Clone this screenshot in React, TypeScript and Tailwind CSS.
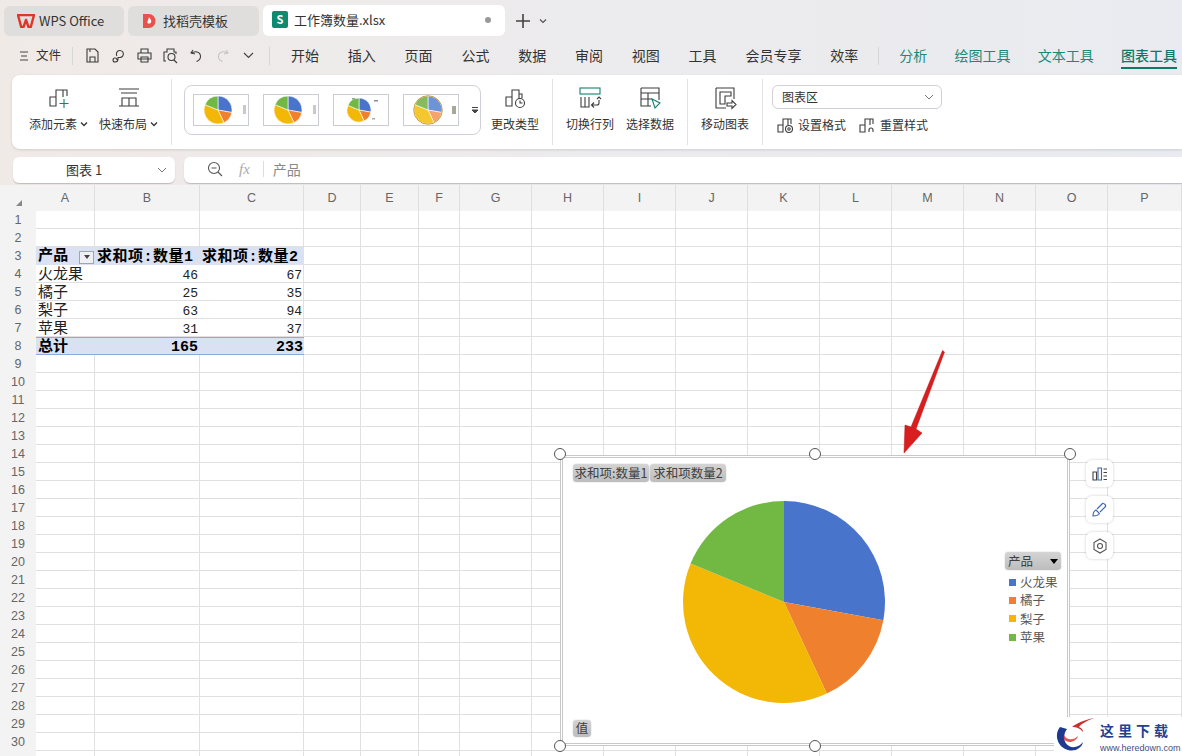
import { ReactNode } from "react";

const UI_FONT = "font-['Noto_Sans_CJK_SC','Noto_Sans',sans-serif]";
const CELL_FONT = "font-['Liberation_Mono','Noto_Sans_CJK_SC',monospace]";

const COLUMNS = ["A", "B", "C", "D", "E", "F", "G", "H", "I", "J", "K", "L", "M", "N", "O", "P"];
const ROWS = Array.from({ length: 31 }, (_, i) => i + 1);

const MENU = ["开始", "插入", "页面", "公式", "数据", "审阅", "视图", "工具", "会员专享", "效率"];

const SLICES = [
  { value: 46, color: "#4874cc" },
  { value: 25, color: "#ef802e" },
  { value: 63, color: "#f3b805" },
  { value: 31, color: "#72b944" },
];

function Pie({
  cx,
  cy,
  r,
  gap = 0,
  colors,
}: {
  cx: number;
  cy: number;
  r: number;
  gap?: number;
  colors?: string[];
}) {
  const total = SLICES.reduce((s, x) => s + x.value, 0);
  let acc = 0;
  return (
    <>
      {SLICES.map((s, i) => {
        const a0 = (acc / total) * Math.PI * 2;
        acc += s.value;
        const a1 = (acc / total) * Math.PI * 2;
        const large = a1 - a0 > Math.PI ? 1 : 0;
        const x0 = cx + r * Math.sin(a0);
        const y0 = cy - r * Math.cos(a0);
        const x1 = cx + r * Math.sin(a1);
        const y1 = cy - r * Math.cos(a1);
        return (
          <path
            key={i}
            d={`M${cx} ${cy}L${x0} ${y0}A${r} ${r} 0 ${large} 1 ${x1} ${y1}Z`}
            fill={colors ? colors[i] : s.color}
            stroke={gap ? "#fff" : "none"}
            strokeWidth={gap}
          />
        );
      })}
    </>
  );
}

function Ico({ w = 24, h = 24, children }: { w?: number; h?: number; children: ReactNode }) {
  return (
    <svg width={w} height={h} viewBox={`0 0 ${w} ${h}`} fill="none" stroke="#3c3c3c" strokeWidth="1.1">
      {children}
    </svg>
  );
}

function Thumb({ kind }: { kind: number }) {
  return (
    <div className="h-[32px] w-[56px] border border-[#c9ccd2] bg-white">
      <svg width="54" height="30" viewBox="0 0 54 30">
        {kind === 3 ? (
          <>
            <Pie cx={24} cy={15} r={14} gap={0.6} colors={["#6d93d8", "#f5a36c", "#f5c72e", "#86bd5c"]} />
            <circle cx="24" cy="15" r="14.3" fill="none" stroke="#b98a22" strokeWidth="0.8" />
            <rect x="48" y="11" width="4" height="8" fill="#a8a894" />
          </>
        ) : kind === 2 ? (
          <>
            <Pie cx={25} cy={15} r={12} gap={0.6} />
            <rect x="40" y="5" width="4" height="1.5" fill="#88a" />
            <rect x="38" y="23" width="3" height="1.5" fill="#aaa" />
            <rect x="18" y="3" width="3" height="1.5" fill="#8a8" />
          </>
        ) : (
          <>
            <Pie cx={24} cy={15} r={14} gap={0.6} />
            <rect x="49" y="10" width="3" height="9" fill="#c9c9c9" />
          </>
        )}
      </svg>
    </div>
  );
}

function BigButton({ icon, label, caret, className }: { icon: ReactNode; label: string; caret?: boolean; className: string }) {
  return (
    <div className={`flex shrink-0 flex-col items-center ${className}`}>
      <div className="flex h-[24px] items-center justify-center">{icon}</div>
      <div className="mt-[4px] flex items-center whitespace-nowrap text-[12px] leading-[20px] text-[#333]">
        {label}
        {caret && (
          <svg width="8" height="6" viewBox="0 0 8 6" className="ml-[3px]" fill="none" stroke="#333" strokeWidth="1.3">
            <path d="M1 1.5l3 3 3-3" />
          </svg>
        )}
      </div>
    </div>
  );
}

function Sep({ className }: { className: string }) {
  return <div className={`h-[66px] w-px shrink-0 bg-[#e3e3e3] ${className}`} />;
}

function Tabs() {
  return (
    <div className="flex h-[36px] items-end pl-[4px]">
      <div className="flex h-[30px] w-[120px] items-center rounded-md bg-[#e0dedd] pb-[1px] pl-[13px]">
        <svg width="18" height="14" viewBox="0 0 18 14">
          <path d="M1 1h16l-3.2 12h-2.3L9 6l-2.5 7H4.2z" fill="none" stroke="#e0352b" strokeWidth="2.4" strokeLinejoin="round" />
        </svg>
        <span className="ml-[4px] text-[13px] text-[#333]">WPS Office</span>
      </div>
      <div className="ml-[4px] flex h-[30px] w-[131px] items-center rounded-md bg-[#e0dedd] pb-[1px] pl-[14px]">
        <svg width="14" height="16" viewBox="0 0 14 16">
          <path d="M1 1h6a6.5 7 0 0 1 0 14H1z" fill="#e8514c" />
          <path d="M7 4c1 2 3 3 2 5.5-.6 1.3-3 1.6-3.6.2C5 8.500 6.500 7 7 4z" fill="#fff" />
        </svg>
        <span className="ml-[7px] text-[13px] text-[#333]">找稻壳模板</span>
      </div>
      <div className="ml-[4px] flex h-[31px] w-[242px] items-center rounded-md bg-white pb-[2px] pl-[9px]">
        <div className="flex h-[17px] w-[16px] items-center justify-center rounded-[2px] bg-[#0e8a70] text-[11px] font-bold text-white">S</div>
        <span className="ml-[6px] text-[13px] text-[#333]">工作簿数量.xlsx</span>
        <div className="ml-auto mr-[14px] h-[6px] w-[6px] rounded-full bg-[#999]" />
      </div>
      <div className="ml-[10px] flex h-[30px] items-center">
        <svg width="16" height="16" viewBox="0 0 16 16" stroke="#444" strokeWidth="1.6">
          <path d="M8 1v14M1 8h14" />
        </svg>
        <svg width="8" height="6" viewBox="0 0 8 6" className="ml-[8px]" fill="none" stroke="#555" strokeWidth="1.2">
          <path d="M1 1.500l3 3 3-3" />
        </svg>
      </div>
    </div>
  );
}

function MenuBar() {
  return (
    <div className="flex h-[39px] items-center text-[14px] text-[#333]">
      <svg width="10" height="10" viewBox="0 0 10 10" className="ml-[19px]" stroke="#444" strokeWidth="1.1">
        <path d="M1 1h8M2 5h6M1 9h8" />
      </svg>
      <span className="ml-[7px] text-[12.500px]">文件</span>
      <div className="ml-[11px] h-[18px] w-px bg-[#d6d6d6]" />
      <div className="ml-[11px] flex items-center gap-[9px]">
        <Ico w={17} h={17}>
          <path d="M3 2h8l3 3v10H3zM6 15v-5h5v5M6 2v3" />
        </Ico>
        <Ico w={17} h={17}>
          <path d="M7 9a3.500 3.500 0 1 1 3 1.500H8V12a3 3 0 0 1-3 3 2 2 0 1 1 2-2" />
        </Ico>
        <Ico w={17} h={17}>
          <path d="M5 6V2h7v4M2 6h13v6H2zM5 10h7v5H5z" />
        </Ico>
        <Ico w={17} h={17}>
          <path d="M4 14H2V5h3V2h7v3h2v2M6 10a3.500 3.500 0 1 0 7 0 3.500 3.500 0 1 0-7 0zM12 13l3 3" />
        </Ico>
        <Ico w={17} h={17}>
          <path d="M5 3L3 6l4 1M3.500 6.500c3-3 9-2 9 3 0 2-1.500 4-4 5" />
        </Ico>
        <svg width="17" height="17" viewBox="0 0 17 17" fill="none" stroke="#c4c4c4" strokeWidth="1.1">
          <path d="M12 3l2 3-4 1M13.500 6.500c-3-3-9-2-9 3 0 2 1.500 4 4 5" />
        </svg>
        <svg width="17" height="17" viewBox="0 0 17 17" fill="none" stroke="#444" strokeWidth="1.2">
          <path d="M4 6l4.500 4.500L13 6" />
        </svg>
      </div>
      <div className="ml-[12px] h-[18px] w-px bg-[#d6d6d6]" />
      <div className="ml-[21px] flex items-center gap-[28.800px] whitespace-nowrap">
        {MENU.map((m) => (
          <span key={m}>{m}</span>
        ))}
      </div>
      <div className="ml-[20px] h-[18px] w-px bg-[#d6d6d6]" />
      <div className="ml-[20px] flex items-center gap-[27.300px] whitespace-nowrap text-[#1a8a78]">
        <span>分析</span>
        <span>绘图工具</span>
        <span>文本工具</span>
        <span className="relative font-medium text-[#0d7a68]">
          图表工具
          <span className="absolute -bottom-[3px] left-0 h-[2px] w-full bg-[#0d7a68]" />
        </span>
      </div>
    </div>
  );
}

function Ribbon() {
  return (
    <div className="ml-[12px] flex h-[74px] items-start rounded-l-lg bg-white shadow-[0_1px_3px_rgba(0,0,0,0.12)]">
      <BigButton
        className="ml-[17px] mt-[11px]"
        caret
        label="添加元素"
        icon={
          <Ico>
            <path d="M3 20V11h6v9zM9 20V4h7v7M16 4h4v6" />
            <path d="M17 13v9M12.500 17.500h9" stroke="#12806c" />
          </Ico>
        }
      />
      <BigButton
        className="ml-[11px] mt-[11px]"
        caret
        label="快速布局"
        icon={
          <Ico>
            <path d="M2 3h20M4 7h16M2 20h20M5 20v-8h7v8M12 12h7v8" />
          </Ico>
        }
      />
      <Sep className="ml-[13px] mt-[4px]" />
      <div className="ml-[12px] mt-[10px] flex h-[50px] w-[297px] shrink-0 items-center rounded-lg border border-[#cfd1d6] pl-[8px]">
        <div className="flex items-center gap-[14px]">
          <Thumb kind={0} />
          <Thumb kind={1} />
          <Thumb kind={2} />
          <Thumb kind={3} />
        </div>
        <svg width="8" height="8" viewBox="0 0 8 8" className="ml-[12px]" stroke="#444">
          <path d="M1 1.500h6" />
          <path d="M1 4h6L4 7z" fill="#444" />
        </svg>
      </div>
      <BigButton
        className="ml-[10px] mt-[11px]"
        label="更改类型"
        icon={
          <Ico>
            <path d="M3 20V11h6v9zM9 20V4h7v9M16 8h3v4" />
            <circle cx="17" cy="17" r="4.500" />
            <path d="M17 14.500V17h2.500" />
          </Ico>
        }
      />
      <Sep className="ml-[13px] mt-[4px]" />
      <BigButton
        className="ml-[13px] mt-[11px]"
        label="切换行列"
        icon={
          <Ico>
            <rect x="2" y="2" width="20" height="6" stroke="#12806c" />
            <path d="M3 11v10h8V11M7 11v10M21 14v3a2 2 0 0 1-2 2h-5M16 16.500L13.500 19l2.500 2.500M19 13l2-2 2 2" />
          </Ico>
        }
      />
      <BigButton
        className="ml-[12px] mt-[11px]"
        label="选择数据"
        icon={
          <Ico>
            <path d="M3 2h18v12M3 2v18h10M3 7h18M3 13h11M10 7v13" />
            <path d="M14 13l8 4-5 5z" stroke="#12806c" />
          </Ico>
        }
      />
      <Sep className="ml-[13px] mt-[4px]" />
      <BigButton
        className="ml-[13px] mt-[11px]"
        label="移动图表"
        icon={
          <Ico>
            <path d="M3 2h18v11M3 2v20h10M7 6h11v4H12v8H7z" />
            <path d="M14 17h5v-2.500l4 4-4 4V20h-5z" />
          </Ico>
        }
      />
      <Sep className="ml-[13px] mt-[4px]" />
      <div className="ml-[9px] mt-[10px] flex flex-col">
        <div className="flex h-[24px] w-[170px] items-center justify-between rounded-md border border-[#cfd1d6] pl-[9px] pr-[7px] text-[12px] text-[#333]">
          图表区
          <svg width="10" height="6" viewBox="0 0 10 6" fill="none" stroke="#777">
            <path d="M1 1l4 4 4-4" />
          </svg>
        </div>
        <div className="mt-[6px] flex items-center whitespace-nowrap text-[12px] leading-[20px] text-[#333]">
          <div className="ml-[5px]">
            <Ico w={17} h={17}>
              <path d="M1 15V8h5v7zM6 15V2h5v6M11 2h3v5" />
              <circle cx="12" cy="12" r="3.500" />
              <circle cx="12" cy="12" r="1.200" />
            </Ico>
          </div>
          <span className="ml-[4px]">设置格式</span>
          <div className="ml-[13px]">
            <Ico w={17} h={17}>
              <path d="M1 15V8h5v7zM6 15V2h5v6M11 2h3v5M10 15v-2a2 2 0 1 1 4 0v2" />
            </Ico>
          </div>
          <span className="ml-[4px]">重置样式</span>
        </div>
      </div>
    </div>
  );
}

function FormulaBar() {
  return (
    <div className="mt-[8px] flex h-[26px] items-stretch">
      <div className="ml-[13px] flex w-[162px] items-center justify-between rounded-md bg-white pl-[53px] pr-[8px] text-[13px] text-[#333] shadow-[0_1px_1px_rgba(0,0,0,0.2)]">
        图表 1
        <svg width="10" height="6" viewBox="0 0 10 6" fill="none" stroke="#777">
          <path d="M1 1l4 4 4-4" />
        </svg>
      </div>
      <div className="ml-[9px] flex flex-1 items-center rounded-l-md bg-white pb-[2px] shadow-[0_1px_1px_rgba(0,0,0,0.2)]">
        <svg width="16" height="16" viewBox="0 0 16 16" className="ml-[23px]" fill="none" stroke="#555" strokeWidth="1.1">
          <circle cx="7" cy="7" r="5.500" />
          <path d="M4.500 7h5M11 11l4 4" />
        </svg>
        <span className="ml-[16px] font-['Liberation_Serif',serif] text-[15px] italic text-[#aaa]">fx</span>
        <div className="ml-[13px] h-[16px] w-px bg-[#ddd]" />
        <span className="ml-[9px] text-[14px] text-[#888]">产品</span>
      </div>
    </div>
  );
}

const COL_WIDTHS = "grid-cols-[36px_59px_105px_104px_57px_58px_41px_72px_72px_72px_72px_72px_72px_72px_72px_72px_74px]";

function cellContent(col: string, row: number) {
  const data: Record<number, [string, string, string]> = {
    4: ["火龙果", "46", "67"],
    5: ["橘子", "25", "35"],
    6: ["梨子", "63", "94"],
    7: ["苹果", "31", "37"],
  };
  if (row === 3) {
    if (col === "A")
      return (
        <div className="flex h-full items-center justify-between pl-[2px] pr-px pt-[2px] text-[15px] font-bold tracking-[0.3px] text-black">
          产品
          <span className="flex h-[13px] w-[15px] items-center justify-center border border-[#9aa] bg-[#eef0f4]">
            <span className="h-0 w-0 border-x-[3.500px] border-t-[4px] border-x-transparent border-t-[#444]" />
          </span>
        </div>
      );
    if (col === "B" || col === "C")
      return (
        <div className="whitespace-nowrap pl-[2px] pt-[2px] text-[15px] font-bold tracking-[0.5px] text-black">
          求和项:数量{col === "B" ? 1 : 2}
        </div>
      );
  }
  if (data[row]) {
    if (col === "A") return <div className="whitespace-nowrap pl-[2px] pt-[2px] text-[15px] text-[#222]">{data[row][0]}</div>;
    if (col === "B") return <div className="pr-[2px] pt-[2px] text-right text-[13px] text-[#222]">{data[row][1]}</div>;
    if (col === "C") return <div className="pr-[1px] pt-[2px] text-right text-[13px] text-[#222]">{data[row][2]}</div>;
  }
  if (row === 8) {
    if (col === "A") return <div className="pl-[2px] pt-[1px] text-[15px] font-bold text-black">总计</div>;
    if (col === "B") return <div className="pr-[2px] pt-[1px] text-right text-[15px] font-bold text-black">165</div>;
    if (col === "C") return <div className="pr-[1px] pt-[1px] text-right text-[15px] font-bold text-black">233</div>;
  }
  return null;
}

function Sheet() {
  return (
    <div className={`mt-[2px] bg-white ${CELL_FONT}`}>
      <div className={`grid h-[26px] ${COL_WIDTHS} bg-[#f3f3f3]`}>
        <div className="flex items-end justify-center pb-[5px]">
          <span className="ml-[1px] h-0 w-0 border-b-[6px] border-l-[6px] border-b-[#888] border-l-transparent" />
        </div>
        {COLUMNS.map((c) => (
          <div
            key={c}
            className="flex items-center justify-center border-r border-[#dedede] font-['Liberation_Sans',sans-serif] text-[12.500px] text-[#666]"
          >
            {c}
          </div>
        ))}
      </div>
      <div className={`grid ${COL_WIDTHS} auto-rows-[18px]`}>
        {ROWS.map((row) => (
          <div key={row} className="contents">
            <div className="flex items-center justify-center bg-[#f3f3f3] pt-[1px] font-['Liberation_Sans',sans-serif] text-[12.500px] text-[#666]">
              {row < 31 ? row : ""}
            </div>
            {COLUMNS.map((c) => {
              const pivot = (row === 3 || row === 8) && (c === "A" || c === "B" || c === "C");
              return (
                <div
                  key={c}
                  className={`leading-[18px] ${
                    pivot
                      ? row === 8
                        ? "border-y border-[#8ea9db] bg-[#d9e1f2]"
                        : "bg-[#d9e1f2]"
                      : row >= 4 && row <= 7 && (c === "A" || c === "B")
                        ? "border-b border-[#e0e0e0]"
                        : "border-b border-r border-[#e0e0e0]"
                  }`}
                >
                  {cellContent(c, row)}
                </div>
              );
            })}
          </div>
        ))}
      </div>
    </div>
  );
}

function Pill({ children, className }: { children: ReactNode; className: string }) {
  return (
    <div
      className={`absolute flex items-center rounded-[4px] bg-linear-to-b from-[#d4d4d4] to-[#bdbdbd] text-[12.500px] leading-none text-[#404040] shadow-[0_0_1px_rgba(0,0,0,0.5)] ${className}`}
    >
      {children}
    </div>
  );
}

function Handle({ className }: { className: string }) {
  return <div className={`absolute h-[12px] w-[12px] rounded-full border border-[#555] bg-white ${className}`} />;
}

function SideButton({ children, className }: { children: ReactNode; className: string }) {
  return (
    <div className={`absolute left-[1086px] flex h-[27px] w-[27px] items-center justify-center rounded-md bg-white shadow-[0_0_3px_rgba(0,0,0,0.2)] ${className}`}>
      {children}
    </div>
  );
}

function Chart() {
  const legend = [
    ["火龙果", "bg-[#4874cc]"],
    ["橘子", "bg-[#ef802e]"],
    ["梨子", "bg-[#f3b805]"],
    ["苹果", "bg-[#72b944]"],
  ];
  return (
    <>
      <div className={`absolute left-[560px] top-[455px] h-[291px] w-[510px] border-[3px] border-double border-[#c8c8c8] bg-white ${UI_FONT}`}>
        <Pill className="left-[10px] top-[6px] h-[18px] w-[76px] justify-center">求和项:数量1</Pill>
        <Pill className="left-[87px] top-[6px] h-[18px] w-[76px] justify-center">求和项数量2</Pill>
        <Pill className="left-[10px] top-[262px] h-[17px] w-[18px] justify-center">值</Pill>
        <svg width="206" height="206" viewBox="0 0 206 206" className="absolute left-[118px] top-[41px]">
          <Pie cx={103} cy={103} r={101} />
        </svg>
        <Pill className="left-[442px] top-[94px] h-[18px] w-[56px] justify-between pl-[3px] pr-[3px]">
          产品
          <span className="h-0 w-0 border-x-[4px] border-t-[5px] border-x-transparent border-t-black" />
        </Pill>
        <div className="absolute left-[446px] top-[115px] flex flex-col text-[12.500px] leading-[18.300px] text-[#595959]">
          {legend.map(([name, color]) => (
            <div key={name} className="flex items-center">
              <span className={`mr-[4px] h-[7px] w-[7px] ${color}`} />
              {name}
            </div>
          ))}
        </div>
      </div>
      <Handle className="left-[554px] top-[448px]" />
      <Handle className="left-[809px] top-[448px]" />
      <Handle className="left-[1064px] top-[448px]" />
      <Handle className="left-[554px] top-[740px]" />
      <Handle className="left-[809px] top-[740px]" />
      <SideButton className="top-[460px]">
        <svg width="16" height="16" viewBox="0 0 16 16" fill="none" stroke="#444" strokeWidth="1.1">
          <path d="M1 6h3.500v8H1z" />
          <path d="M6 2h3.500v12H6z" stroke="#3c64b4" />
          <path d="M11.500 3H15M11.500 6.500H15M11.500 10H15M11.500 13.500H15" />
        </svg>
      </SideButton>
      <SideButton className="top-[496px]">
        <svg width="16" height="16" viewBox="0 0 16 16" fill="none" stroke="#3c64b4" strokeWidth="1.1">
          <path d="M1 14c0-3 1-5 3-6l3.500 3.500c-1 1.500-3.500 2.500-6.500 2.500zM5 7l5.500-5.500c1-1 4 2 3 3L8 10" />
        </svg>
      </SideButton>
      <SideButton className="top-[532px]">
        <svg width="16" height="16" viewBox="0 0 16 16" fill="none" stroke="#555" strokeWidth="1.1">
          <path d="M8 1l6 3.500v7L8 15l-6-3.500v-7z" />
          <circle cx="8" cy="8" r="2.500" />
        </svg>
      </SideButton>
    </>
  );
}

function Arrow() {
  return (
    <svg width="60" height="120" viewBox="0 0 60 120" className="absolute left-[895px] top-[345px]">
      <path d="M47.500 5.500L49.500 7 21 84l6 4-18 20 1-28 6 2z" fill="#d81e1e" stroke="#b81616" strokeWidth="0.5" />
    </svg>
  );
}

function Watermark() {
  return (
    <div className="absolute right-0 top-[717px] flex h-[39px] w-[128px] items-center bg-white">
      <svg width="44" height="39" viewBox="0 0 44 39" className="shrink-0">
        <path d="M6 10c-6 7-3 20 8 23 7 2 14-2 15-8-3 4-9 7-14 4C9 26 9 17 13 12z" fill="#1e3a8e" />
        <path d="M10 18c3 6 10 5 14 1-1 4-7 8-12 5-2-1-3-4-2-6z" fill="#d9302c" opacity="0.8" />
        <path d="M18 10c5-4 12-7 22-9-7 3-12 5-15 9 3 1 4 3 4 5-3-4-7-5-11-5z" fill="#c9302c" />
      </svg>
      <div className="ml-[2px] flex flex-col items-start">
        <span className="text-[14px] font-bold leading-[18px] tracking-[4px] text-[#24408f]">这里下载</span>
        <span className="mt-[4px] font-['Liberation_Sans',sans-serif] text-[9px] leading-[10px] text-[#44507a]">www.heredown.com</span>
      </div>
    </div>
  );
}

export default function App() {
  return (
    <div className={`relative h-[756px] w-[1182px] overflow-hidden bg-linear-to-r from-[#f0eae7] via-[#ecebed] to-[#eaebf0] ${UI_FONT}`}>
      <Tabs />
      <MenuBar />
      <Ribbon />
      <FormulaBar />
      <Sheet />
      <Chart />
      <Arrow />
      <Watermark />
    </div>
  );
}
